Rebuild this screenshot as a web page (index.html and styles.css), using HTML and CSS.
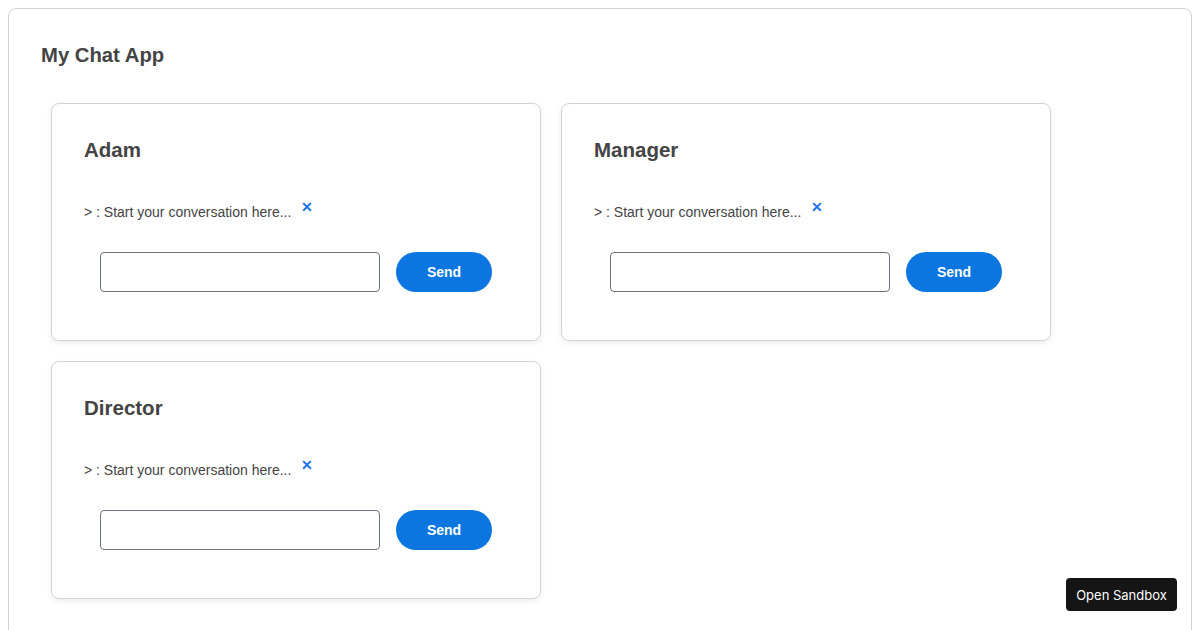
FILE: index.html
```html
<!DOCTYPE html>
<html lang="en">
<head>
    <meta charset="UTF-8">
    <meta name="viewport" content="width=device-width, initial-scale=1.0">
    <title>My Chat App</title>
    <link rel="stylesheet" href="styles.css">
</head>
<body>
    <div class="app">
        <h1>My Chat App</h1>
        <div class="chat-grid">
            <div class="chat-card">
                <h2>Adam</h2>
                <div class="message">
                    <span>&gt; : Start your conversation here...</span>
                    <button class="remove" type="button">&#x2715;</button>
                </div>
                <form class="send-form">
                    <input type="text">
                    <button type="button" class="send">Send</button>
                </form>
            </div>
            <div class="chat-card">
                <h2>Manager</h2>
                <div class="message">
                    <span>&gt; : Start your conversation here...</span>
                    <button class="remove" type="button">&#x2715;</button>
                </div>
                <form class="send-form">
                    <input type="text">
                    <button type="button" class="send">Send</button>
                </form>
            </div>
            <div class="chat-card">
                <h2>Director</h2>
                <div class="message">
                    <span>&gt; : Start your conversation here...</span>
                    <button class="remove" type="button">&#x2715;</button>
                </div>
                <form class="send-form">
                    <input type="text">
                    <button type="button" class="send">Send</button>
                </form>
            </div>
        </div>
    </div>
    <button class="sandbox" type="button">Open Sandbox</button>
</body>
</html>
```

FILE: styles.css
```css
body {
    margin: 8px;
    font-family: "Liberation Sans", Arial, sans-serif;
    color: #444;
    background: #fff;
}
.app {
    border: 1px solid #d4d4d8;
    border-radius: 8px;
    padding: 35px 32px 40px;
    min-height: 560px;
}
h1 {
    margin: 0;
    font-size: 20.3px;
    color: #444;
}
.chat-grid {
    display: grid;
    grid-template-columns: 490px 490px;
    gap: 20px;
    padding: 10px;
    margin-top: 26px;
}
.chat-card {
    box-sizing: border-box;
    height: 238px;
    border: 1px solid #d4d4d8;
    border-radius: 8px;
    box-shadow: 0 2px 6px rgba(0,0,0,0.08);
    padding: 34px 32px;
}
h2 {
    margin: 0;
    font-size: 20.5px;
    color: #444;
}
.message {
    margin-top: 38px;
    font-size: 14px;
    display: flex;
    align-items: flex-start;
}
.message span {
    margin-top: 4px;
}
.remove {
    border: none;
    background: none;
    color: #1a73e8;
    font-size: 14px;
    font-weight: bold;
    padding: 0;
    margin-left: 10px;
    cursor: pointer;
    line-height: 1;
}
.send-form {
    display: flex;
    gap: 16px;
    padding: 0 16px;
    margin-top: 32px;
}
.send-form input {
    box-sizing: border-box;
    width: 280px;
    height: 40px;
    border: 1px solid #6c757d;
    border-radius: 4px;
}
.send {
    width: 96px;
    height: 40px;
    border: none;
    border-radius: 20px;
    background: #0b76e0;
    color: #fff;
    font-family: "Liberation Sans", Arial, sans-serif;
    font-size: 14px;
    font-weight: bold;
    cursor: pointer;
}
.sandbox {
    position: fixed;
    right: 23px;
    bottom: 19px;
    width: 111px;
    height: 33px;
    background: #151515;
    color: #fff;
    border: none;
    border-radius: 4px;
    font-family: Inter, "Liberation Sans", sans-serif;
    font-size: 13px;
    cursor: pointer;
}
```
